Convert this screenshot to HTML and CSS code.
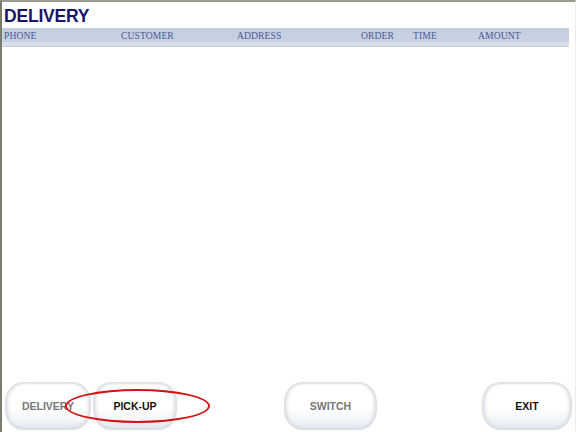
FILE: index.html
```html
<!DOCTYPE html>
<html lang="en">
<head>
<meta charset="utf-8">
<title>Delivery</title>
<link rel="stylesheet" href="styles.css">
</head>
<body>
<div class="screen">
  <h1 class="title">DELIVERY</h1>
  <div class="grid-head">
    <span class="col col-phone">PHONE</span>
    <span class="col col-customer">CUSTOMER</span>
    <span class="col col-address">ADDRESS</span>
    <span class="col col-order">ORDER</span>
    <span class="col col-time">TIME</span>
    <span class="col col-amount">AMOUNT</span>
  </div>
  <div class="list"></div>
  <div class="toolbar">
    <button class="btn btn-delivery dim">DELIVERY</button>
    <button class="btn btn-pickup">PICK-UP</button>
    <button class="btn btn-switch dim">SWITCH</button>
    <button class="btn btn-exit">EXIT</button>
    <div class="ring"></div>
  </div>
</div>
</body>
</html>
```
FILE: styles.css
```css
html, body {
  margin: 0;
  padding: 0;
  background: #ffffff;
}

.screen {
  box-sizing: border-box;
  width: 576px;
  height: 432px;
  border-top: 2px solid #9a9a90;
  border-left: 2px solid #7c7c6c;
  border-right: 1px solid #ececec;
  display: flex;
  flex-direction: column;
  overflow: hidden;
}

.title {
  margin: 0;
  padding: 4px 0 0 2px;
  height: 22px;
  font-family: "Liberation Sans", Arial, sans-serif;
  font-weight: bold;
  font-size: 17.5px;
  line-height: 20px;
  color: #15156c;
  letter-spacing: -0.2px;
}

.grid-head {
  display: flex;
  align-items: center;
  width: 567px;
  height: 12px;
  padding: 2px 0 0;
  background: linear-gradient(#c3cede, #c8d2e2);
  border-bottom: 4px solid #d7dfea;
  box-shadow: 0 1px 0 #c9d0dc;
  font-family: "Liberation Serif", "Times New Roman", serif;
  font-size: 9.6px;
  letter-spacing: 0.1px;
  line-height: 12px;
  color: #4b5899;
}

.col { display: block; white-space: nowrap; }
.col-phone { padding-left: 2px; width: 117px; }
.col-customer { width: 116px; }
.col-address { width: 124px; }
.col-order { width: 52px; }
.col-time { width: 65px; }

.list {
  flex: 1;
}

.toolbar {
  position: relative;
  display: flex;
  align-items: center;
  height: 48px;
  padding: 0 0 2px 3px;
}

.btn {
  box-sizing: border-box;
  height: 48px;
  border: 1px solid #dcdfe4;
  border-radius: 18px / 20px;
  background: linear-gradient(#ffffff 0%, #ffffff 55%, #f3f5f9 80%, #dfe5ee 100%);
  box-shadow: inset 3px 0 4px -2px #cdd0d6, inset -3px 0 4px -2px #cdd0d6, inset 0 2px 2px -1px #e6e8ec;
  font-family: "Liberation Sans", Arial, sans-serif;
  font-weight: bold;
  font-size: 10.5px;
  color: #111111;
  padding: 0;
}

.btn.dim { color: #777777; }

.btn-delivery { width: 86px; }
.btn-pickup { width: 84px; margin-left: 2px; }
.btn-switch { width: 93px; margin-left: 107px; }
.btn-exit { width: 90px; margin-left: 105px; }

/* red marker drawn around the pick-up button */
.ring {
  position: absolute;
  left: 63px;
  top: 7px;
  width: 141px;
  height: 30px;
  border: 2px solid #d41414;
  border-radius: 50%;
}
```
